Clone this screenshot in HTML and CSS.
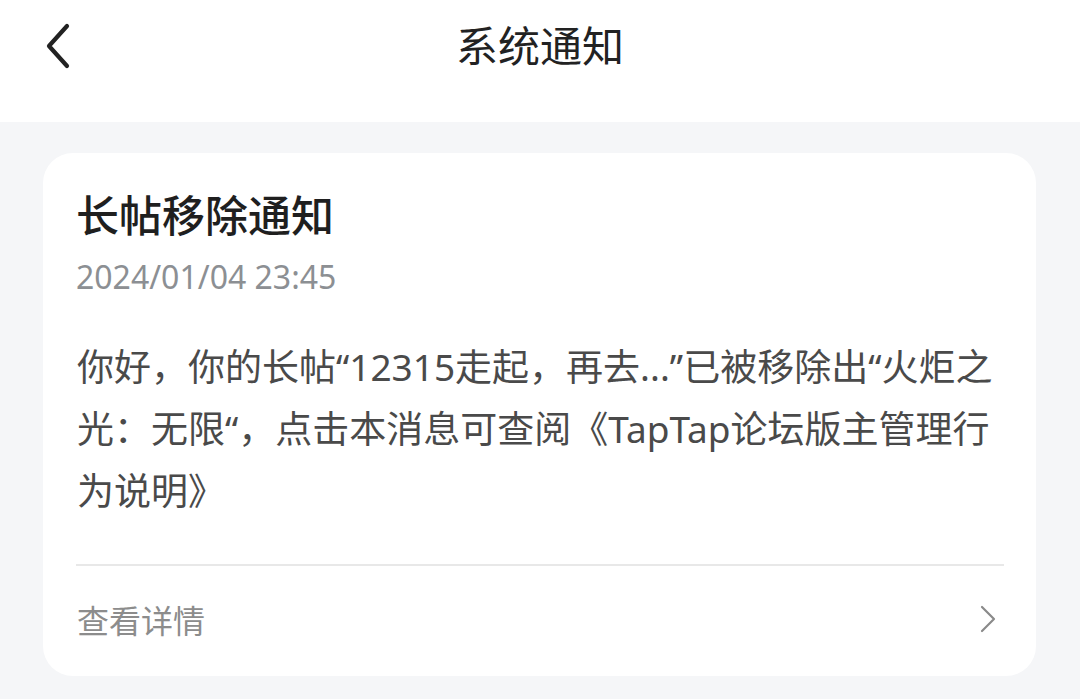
FILE: index.html
```html
<!DOCTYPE html>
<html lang="zh-CN">
<head>
<meta charset="utf-8">
<title>系统通知</title>
<link rel="stylesheet" href="styles.css">
</head>
<body>
<div class="page">
  <header class="topbar">
    <button class="back" aria-label="返回">
      <svg width="30" height="46" viewBox="0 0 30 46"><path d="M24 3 L6 23 L24 43" fill="none" stroke="#222" stroke-width="4.2" stroke-linecap="round" stroke-linejoin="round"/></svg>
    </button>
    <h1 class="topbar-title">系统通知</h1>
  </header>
  <main class="content">
    <article class="card">
      <h2 class="card-title">长帖移除通知</h2>
      <div class="card-date">2024/01/04 23:45</div>
      <p class="card-body">你好，你的长帖“12315走起，再去...”已被移除出“火炬之光：无限“，点击本消息可查阅《TapTap论坛版主管理行为说明》</p>
      <div class="card-footer">
        <span class="more">查看详情</span>
        <svg class="arrow" width="20" height="30" viewBox="0 0 20 30"><path d="M4 3 L16 15 L4 27" fill="none" stroke="#8a8a8a" stroke-width="2.2" stroke-linecap="round" stroke-linejoin="round"/></svg>
      </div>
    </article>
  </main>
</div>
</body>
</html>
```

FILE: styles.css
```css
* { box-sizing: border-box; }
html, body { margin: 0; padding: 0; }
body {
  width: 1080px;
  height: 699px;
  overflow: hidden;
  background: #f5f6f8;
  font-family: "Noto Sans", "Noto Sans CJK SC", sans-serif;
}
.page { display: flex; flex-direction: column; }
.topbar {
  position: relative;
  height: 122px;
  background: #fff;
  display: flex;
  justify-content: center;
  padding-top: 19px;
}
.back {
  position: absolute;
  left: 43px;
  top: 23px;
  border: 0;
  background: none;
  padding: 0;
  width: 30px;
  height: 46px;
  display: flex;
}
.topbar-title {
  margin: 0;
  font-family: "Noto Sans CJK SC", sans-serif;
  font-size: 42px;
  font-weight: 400;
  color: #222;
  line-height: 50px;
  height: 50px;
}
.content { padding: 31px 44px 0 43px; }
.card {
  background: #fff;
  border-radius: 30px;
  padding: 28px 32px 0 33px;
}
.card-title {
  margin: 0;
  font-family: "Noto Sans CJK SC", sans-serif;
  font-size: 43px;
  font-weight: 500;
  line-height: 64px;
  color: #1f1f1f;
}
.card-date {
  margin-top: 11px;
  font-size: 32px;
  line-height: 42px;
  color: #8c8f93;
}
.card-body {
  margin: 38px 0 0;
  font-size: 37px;
  line-height: 62px;
  color: #4a4a4a;
  padding-left: 1px;
}
.card-footer {
  margin-top: 42px;
  border-top: 2px solid #e8e8e8;
  height: 112px;
  padding-bottom: 5px;
  display: flex;
  align-items: center;
  justify-content: space-between;
}
.more {
  font-family: "Noto Sans CJK SC", sans-serif;
  font-size: 32px;
  color: #8c8c8c;
  padding-left: 1px;
}
.arrow { margin-right: 6px; }
```
